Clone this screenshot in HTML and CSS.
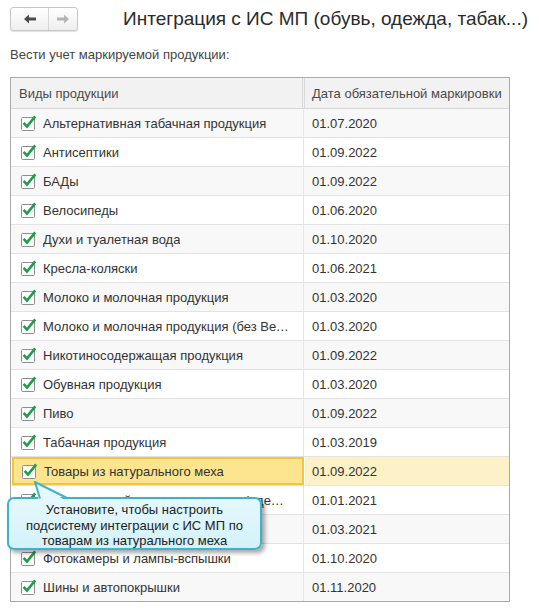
FILE: index.html
```html
<!DOCTYPE html>
<html lang="ru">
<head>
<meta charset="utf-8">
<link rel="stylesheet" href="styles.css">
</head>
<body>
<div class="page">
  <div class="topbar">
    <div class="nav">
      <button class="nav-btn back" type="button">
        <svg width="12" height="10" viewBox="0 0 12 10"><path d="M0,5 L5,0.5 L5,3.5 L12,3.5 L12,6.5 L5,6.5 L5,9.5 Z" fill="#4a4a4a"/></svg>
      </button>
      <button class="nav-btn fwd" type="button">
        <svg width="12" height="10" viewBox="0 0 12 10"><path d="M12,5 L7,0.5 L7,3.5 L0,3.5 L0,6.5 L7,6.5 L7,9.5 Z" fill="#b4b4b4"/></svg>
      </button>
    </div>
    <h1 class="title">Интеграция с ИС МП (обувь, одежда, табак...)</h1>
  </div>

  <div class="label">Вести учет маркируемой продукции:</div>

  <div class="grid">
    <div class="grid-head">
      <div class="hcell hname">Виды продукции</div>
      <div class="hcell hdate">Дата обязательной маркировки</div>
    </div>
    <div class="rows">
      <div class="row odd"><div class="cname"><svg class="cb" width="16" height="17" viewBox="0 0 16 17"><rect x="0.5" y="2.5" width="13" height="13" rx="1" fill="#fff" stroke="#8e8e8e"/><path d="M2.6,7.8 L6,11.6 L14.2,1.4" fill="none" stroke="#1f9e48" stroke-width="2.6"/></svg><span class="txt">Альтернативная табачная продукция</span></div><div class="cdate">01.07.2020</div></div>
      <div class="row"><div class="cname"><svg class="cb" width="16" height="17" viewBox="0 0 16 17"><rect x="0.5" y="2.5" width="13" height="13" rx="1" fill="#fff" stroke="#8e8e8e"/><path d="M2.6,7.8 L6,11.6 L14.2,1.4" fill="none" stroke="#1f9e48" stroke-width="2.6"/></svg><span class="txt">Антисептики</span></div><div class="cdate">01.09.2022</div></div>
      <div class="row odd"><div class="cname"><svg class="cb" width="16" height="17" viewBox="0 0 16 17"><rect x="0.5" y="2.5" width="13" height="13" rx="1" fill="#fff" stroke="#8e8e8e"/><path d="M2.6,7.8 L6,11.6 L14.2,1.4" fill="none" stroke="#1f9e48" stroke-width="2.6"/></svg><span class="txt">БАДы</span></div><div class="cdate">01.09.2022</div></div>
      <div class="row"><div class="cname"><svg class="cb" width="16" height="17" viewBox="0 0 16 17"><rect x="0.5" y="2.5" width="13" height="13" rx="1" fill="#fff" stroke="#8e8e8e"/><path d="M2.6,7.8 L6,11.6 L14.2,1.4" fill="none" stroke="#1f9e48" stroke-width="2.6"/></svg><span class="txt">Велосипеды</span></div><div class="cdate">01.06.2020</div></div>
      <div class="row odd"><div class="cname"><svg class="cb" width="16" height="17" viewBox="0 0 16 17"><rect x="0.5" y="2.5" width="13" height="13" rx="1" fill="#fff" stroke="#8e8e8e"/><path d="M2.6,7.8 L6,11.6 L14.2,1.4" fill="none" stroke="#1f9e48" stroke-width="2.6"/></svg><span class="txt">Духи и туалетная вода</span></div><div class="cdate">01.10.2020</div></div>
      <div class="row"><div class="cname"><svg class="cb" width="16" height="17" viewBox="0 0 16 17"><rect x="0.5" y="2.5" width="13" height="13" rx="1" fill="#fff" stroke="#8e8e8e"/><path d="M2.6,7.8 L6,11.6 L14.2,1.4" fill="none" stroke="#1f9e48" stroke-width="2.6"/></svg><span class="txt">Кресла-коляски</span></div><div class="cdate">01.06.2021</div></div>
      <div class="row odd"><div class="cname"><svg class="cb" width="16" height="17" viewBox="0 0 16 17"><rect x="0.5" y="2.5" width="13" height="13" rx="1" fill="#fff" stroke="#8e8e8e"/><path d="M2.6,7.8 L6,11.6 L14.2,1.4" fill="none" stroke="#1f9e48" stroke-width="2.6"/></svg><span class="txt">Молоко и молочная продукция</span></div><div class="cdate">01.03.2020</div></div>
      <div class="row"><div class="cname"><svg class="cb" width="16" height="17" viewBox="0 0 16 17"><rect x="0.5" y="2.5" width="13" height="13" rx="1" fill="#fff" stroke="#8e8e8e"/><path d="M2.6,7.8 L6,11.6 L14.2,1.4" fill="none" stroke="#1f9e48" stroke-width="2.6"/></svg><span class="txt">Молоко и молочная продукция (без ВетИС)</span></div><div class="cdate">01.03.2020</div></div>
      <div class="row odd"><div class="cname"><svg class="cb" width="16" height="17" viewBox="0 0 16 17"><rect x="0.5" y="2.5" width="13" height="13" rx="1" fill="#fff" stroke="#8e8e8e"/><path d="M2.6,7.8 L6,11.6 L14.2,1.4" fill="none" stroke="#1f9e48" stroke-width="2.6"/></svg><span class="txt">Никотиносодержащая продукция</span></div><div class="cdate">01.09.2022</div></div>
      <div class="row"><div class="cname"><svg class="cb" width="16" height="17" viewBox="0 0 16 17"><rect x="0.5" y="2.5" width="13" height="13" rx="1" fill="#fff" stroke="#8e8e8e"/><path d="M2.6,7.8 L6,11.6 L14.2,1.4" fill="none" stroke="#1f9e48" stroke-width="2.6"/></svg><span class="txt">Обувная продукция</span></div><div class="cdate">01.03.2020</div></div>
      <div class="row odd"><div class="cname"><svg class="cb" width="16" height="17" viewBox="0 0 16 17"><rect x="0.5" y="2.5" width="13" height="13" rx="1" fill="#fff" stroke="#8e8e8e"/><path d="M2.6,7.8 L6,11.6 L14.2,1.4" fill="none" stroke="#1f9e48" stroke-width="2.6"/></svg><span class="txt">Пиво</span></div><div class="cdate">01.09.2022</div></div>
      <div class="row"><div class="cname"><svg class="cb" width="16" height="17" viewBox="0 0 16 17"><rect x="0.5" y="2.5" width="13" height="13" rx="1" fill="#fff" stroke="#8e8e8e"/><path d="M2.6,7.8 L6,11.6 L14.2,1.4" fill="none" stroke="#1f9e48" stroke-width="2.6"/></svg><span class="txt">Табачная продукция</span></div><div class="cdate">01.03.2019</div></div>
      <div class="row odd current"><div class="cname"><svg class="cb" width="16" height="17" viewBox="0 0 16 17"><rect x="0.5" y="2.5" width="13" height="13" rx="1" fill="#fff" stroke="#8e8e8e"/><path d="M2.6,7.8 L6,11.6 L14.2,1.4" fill="none" stroke="#1f9e48" stroke-width="2.6"/></svg><span class="txt">Товары из натурального меха</span></div><div class="cdate">01.09.2022</div></div>
      <div class="row"><div class="cname"><svg class="cb" width="16" height="17" viewBox="0 0 16 17"><rect x="0.5" y="2.5" width="13" height="13" rx="1" fill="#fff" stroke="#8e8e8e"/><path d="M2.6,7.8 L6,11.6 L14.2,1.4" fill="none" stroke="#1f9e48" stroke-width="2.6"/></svg><span class="txt">Товары легкой промышленности (одежда)</span></div><div class="cdate">01.01.2021</div></div>
      <div class="row odd"><div class="cname"><svg class="cb" width="16" height="17" viewBox="0 0 16 17"><rect x="0.5" y="2.5" width="13" height="13" rx="1" fill="#fff" stroke="#8e8e8e"/><path d="M2.6,7.8 L6,11.6 L14.2,1.4" fill="none" stroke="#1f9e48" stroke-width="2.6"/></svg><span class="txt">Упакованная вода</span></div><div class="cdate">01.03.2021</div></div>
      <div class="row"><div class="cname"><svg class="cb" width="16" height="17" viewBox="0 0 16 17"><rect x="0.5" y="2.5" width="13" height="13" rx="1" fill="#fff" stroke="#8e8e8e"/><path d="M2.6,7.8 L6,11.6 L14.2,1.4" fill="none" stroke="#1f9e48" stroke-width="2.6"/></svg><span class="txt">Фотокамеры и лампы-вспышки</span></div><div class="cdate">01.10.2020</div></div>
      <div class="row odd last"><div class="cname"><svg class="cb" width="16" height="17" viewBox="0 0 16 17"><rect x="0.5" y="2.5" width="13" height="13" rx="1" fill="#fff" stroke="#8e8e8e"/><path d="M2.6,7.8 L6,11.6 L14.2,1.4" fill="none" stroke="#1f9e48" stroke-width="2.6"/></svg><span class="txt">Шины и автопокрышки</span></div><div class="cdate">01.11.2020</div></div>
    </div>
  </div>

  <div class="callout">
    <svg class="callout-tail" width="44" height="22" viewBox="0 0 44 22"><path d="M9,21 L5,1 L38,21 Z" fill="#e4f8fd"/><path d="M10,17.5 L5,1 L38,17.5" fill="none" stroke="#3cb2ce" stroke-width="2"/></svg>
    <div class="callout-box">Установите, чтобы настроить подсистему интеграции с ИС МП по товарам из натурального меха</div>
  </div>
</div>
</body>
</html>
```

FILE: styles.css
```css
* { box-sizing: border-box; }

html, body {
  margin: 0;
  padding: 0;
  background: #ffffff;
}

body {
  font-family: "Liberation Sans", Arial, sans-serif;
  font-size: 13px;
  color: #333333;
}

.page {
  position: relative;
  padding: 7px 0 0 10px;
}

.topbar {
  display: flex;
  align-items: center;
  height: 24px;
}

.nav {
  display: flex;
  width: 68px;
  height: 24px;
  border: 1px solid #c6c6c6;
  border-radius: 3px;
  background: linear-gradient(#ffffff, #eeeeee);
  box-shadow: 0 1px 1px rgba(0, 0, 0, 0.12);
  overflow: hidden;
}

.nav-btn {
  flex: 1;
  margin: 0;
  padding: 0;
  border: 0;
  background: transparent;
  display: flex;
  align-items: center;
  justify-content: center;
}

.nav-btn.back {
  border-right: 1px solid #d6d6d6;
  flex: 0 0 38px;
}

.title {
  margin: 0 0 0 45px;
  font-size: 19px;
  font-weight: normal;
  color: #2b2b2b;
  line-height: 26px;
  white-space: nowrap;
}

.label {
  margin-top: 16px;
  line-height: 16px;
  color: #444444;
}

.grid {
  margin-top: 14px;
  width: 500px;
  border: 1px solid #a9a9a9;
}

.grid-head {
  display: flex;
  height: 31px;
  background: #f2f2f2;
  border-bottom: 1px solid #d6d6d6;
  color: #4a4a4a;
}

.hcell {
  display: flex;
  align-items: center;
  height: 30px;
}

.hname {
  width: 292px;
  padding-left: 8px;
  border-right: 1px solid #d9d9d9;
}

.hdate {
  margin-left: 1px;
  flex: 1;
  padding-left: 7px;
  border-left: 1px solid #d9d9d9;
}

.row {
  display: flex;
  height: 29px;
  border-bottom: 1px solid #e3e3e3;
  background: #ffffff;
}

.row.odd { background: #f8f8f8; }
.row.last { border-bottom: 0; height: 28px; }

.cname {
  width: 293px;
  display: flex;
  align-items: center;
  padding: 0 14px 0 10px;
  border-right: 1px solid #e6e6e6;
  min-width: 0;
}

.cb {
  flex: 0 0 16px;
  margin-right: 6px;
  margin-top: 1px;
}

.txt {
  white-space: nowrap;
  overflow: hidden;
  text-overflow: ellipsis;
  min-width: 0;
  color: #333333;
}

.cdate {
  flex: 1;
  display: flex;
  align-items: center;
  padding-left: 8px;
  color: #333333;
}

.row.current { background: #ffffff; }

.row.current .cname {
  background: #fde48f;
  border: 2px solid #f6c33e;
  padding-left: 8px;
  margin-left: 1px;
  width: 292px;
}

.row.current .cdate {
  background: #fdf1c7;
  margin-left: 1px;
  padding-left: 7px;
}

.callout {
  position: absolute;
  left: 7px;
  top: 497px;
  width: 255px;
  height: 53px;
}

.callout-box {
  width: 255px;
  height: 53px;
  border: 2px solid #3cb2ce;
  border-radius: 7px;
  background: linear-gradient(#e4f8fd, #d4f2fa);
  box-shadow: 3px 3px 4px rgba(0, 0, 0, 0.35);
  padding: 3px 6px 0;
  text-align: center;
  line-height: 15.5px;
  color: #222222;
}

.callout-tail {
  position: absolute;
  left: 23px;
  top: -16px;
  z-index: 1;
}
```
